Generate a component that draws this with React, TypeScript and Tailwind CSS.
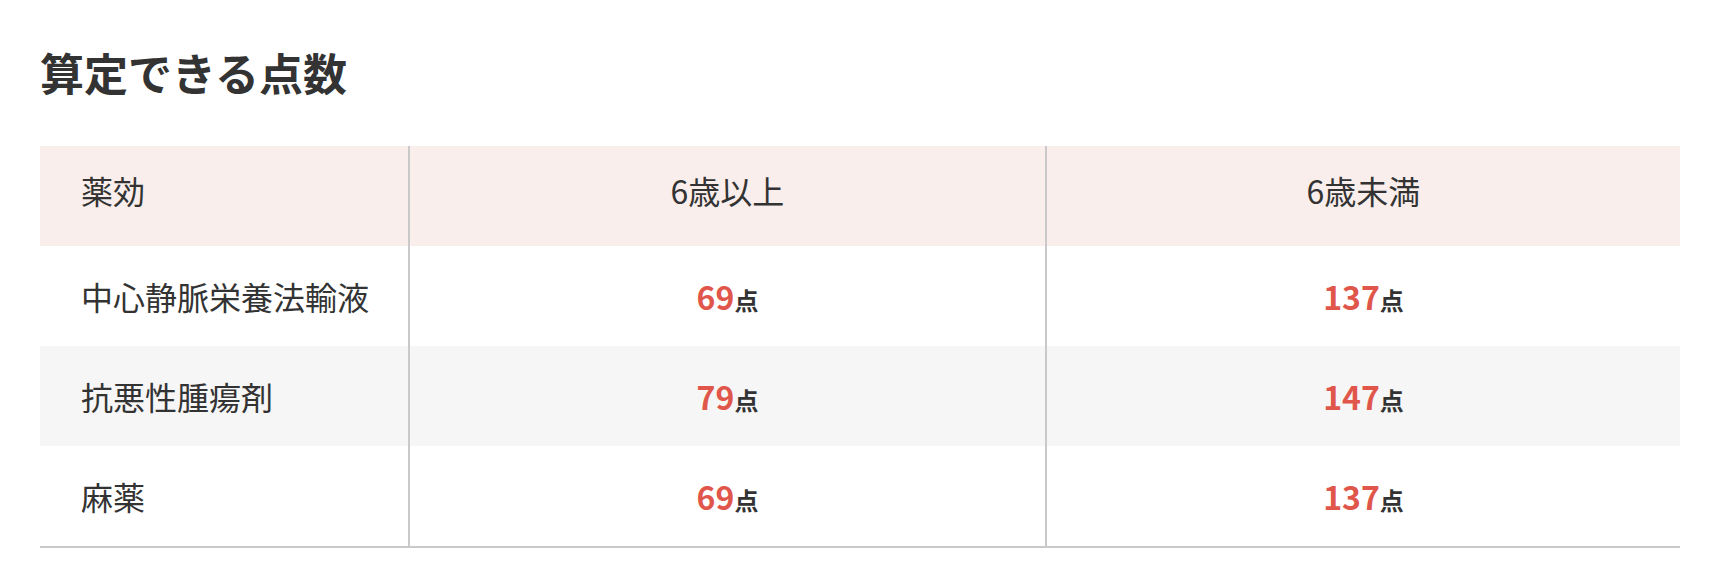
import React from "react";

const rows = [
  { name: "中心静脈栄養法輸液", a: "69", b: "137", bg: "bg-white" },
  { name: "抗悪性腫瘍剤", a: "79", b: "147", bg: "bg-[#f6f6f6]" },
  { name: "麻薬", a: "69", b: "137", bg: "bg-white" },
];

function Points({ v }: { v: string }) {
  return (
    <span className="font-bold">
      <span className="text-[32px] text-[#e0564b]">{v}</span>
      <span className="text-[24px] text-[#333]">点</span>
    </span>
  );
}

export default function App() {
  return (
    <div
      className="w-[1720px] h-[588px] bg-white px-[40px] pt-[39px] text-[#333]"
      style={{ fontFamily: '"Noto Sans CJK JP", "Noto Sans", sans-serif' }}
    >
      <h2 className="text-[44px] font-bold leading-[66px]">算定できる点数</h2>
      <div className="mt-[41px] border-b-2 border-[#c9c9c9]">
        <div className="grid grid-cols-[370px_637px_1fr] bg-[#f9eeec] text-[32px] h-[100px]">
          <div className="border-r-2 border-[#c9c9c9] flex items-center pl-[41px] pb-[12px]">薬効</div>
          <div className="border-r-2 border-[#c9c9c9] flex items-center justify-center pb-[12px]">6歳以上</div>
          <div className="flex items-center justify-center pb-[12px]">6歳未満</div>
        </div>
        {rows.map((r) => (
          <div key={r.name} className={`grid grid-cols-[370px_637px_1fr] h-[100px] ${r.bg}`}>
            <div className="border-r-2 border-[#c9c9c9] flex items-center pl-[41px] text-[32px]">{r.name}</div>
            <div className="border-r-2 border-[#c9c9c9] flex items-center justify-center">
              <Points v={r.a} />
            </div>
            <div className="flex items-center justify-center">
              <Points v={r.b} />
            </div>
          </div>
        ))}
      </div>
    </div>
  );
}
